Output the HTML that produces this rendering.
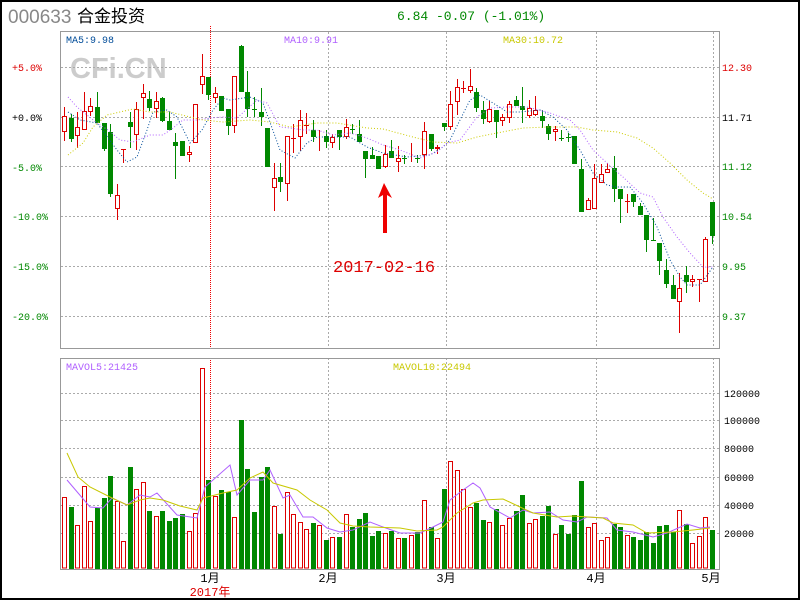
<!DOCTYPE html>
<html><head><meta charset="utf-8">
<style>
html,body{margin:0;padding:0;background:#fff;}
#wrap{position:relative;width:800px;height:600px;overflow:hidden;}
svg text{font-family:"Liberation Mono",monospace;}
</style></head><body><div id="wrap">
<svg id="s" width="800" height="600" viewBox="0 0 800 600" xmlns="http://www.w3.org/2000/svg">
<rect x="1" y="1" width="798" height="598" fill="#fff" stroke="#000" stroke-width="2"/>
<text x="8" y="23" font-family="Liberation Sans, sans-serif" font-size="19" fill="#888" style="font-family:'Liberation Sans',sans-serif">000633</text>
<text x="77" y="22" font-size="17" fill="#000" style="font-family:'Liberation Sans','Noto Sans CJK SC',sans-serif">合金投资</text>
<text x="397" y="20" font-size="13" fill="#080">6.84 -0.07 (-1.01%)</text>
<text x="70" y="78" font-size="29" font-weight="bold" fill="#ccc" style="font-family:'Liberation Sans',sans-serif">CFi.CN</text>
<g id="grid" stroke="#aaa" stroke-width="1" stroke-dasharray="2 2" fill="none">
<line x1="61" y1="67.5" x2="720" y2="67.5"/><line x1="61" y1="117.5" x2="720" y2="117.5"/><line x1="61" y1="166.5" x2="720" y2="166.5"/><line x1="61" y1="216.5" x2="720" y2="216.5"/><line x1="61" y1="266.5" x2="720" y2="266.5"/><line x1="61" y1="316.5" x2="720" y2="316.5"/>
<line x1="328.5" y1="32" x2="328.5" y2="348"/><line x1="446.5" y1="32" x2="446.5" y2="348"/><line x1="596.5" y1="32" x2="596.5" y2="348"/><line x1="713.5" y1="32" x2="713.5" y2="348"/>
<line x1="61" y1="393.5" x2="720" y2="393.5"/><line x1="61" y1="420.5" x2="720" y2="420.5"/><line x1="61" y1="448.5" x2="720" y2="448.5"/><line x1="61" y1="477.5" x2="720" y2="477.5"/><line x1="61" y1="505.5" x2="720" y2="505.5"/><line x1="61" y1="533.5" x2="720" y2="533.5"/>
<line x1="328.5" y1="358" x2="328.5" y2="569"/><line x1="446.5" y1="358" x2="446.5" y2="569"/><line x1="596.5" y1="358" x2="596.5" y2="569"/><line x1="713.5" y1="358" x2="713.5" y2="569"/>
</g>
<line x1="210.5" y1="26" x2="210.5" y2="348" stroke="#e00" stroke-dasharray="1 1"/>
<line x1="210.5" y1="358" x2="210.5" y2="569" stroke="#e00" stroke-dasharray="1 1"/>
<rect x="60.5" y="31.5" width="659" height="317" fill="none" stroke="#999"/>
<rect x="60.5" y="358.5" width="659" height="211" fill="none" stroke="#999"/>
<g id="cand"></g>
<g id="vol"></g>
<g fill="none" stroke-width="1">
<polyline stroke="#004c99" stroke-dasharray="1 2" points="68,112 80,120 97,123 117,150 127,162 137,157 147,130 153,112 167,110 177,117 190,143 202,130 213,110 223,98 230,100 250,97 263,103 280,150 295,158 307,143 317,137 333,137 350,137 367,147 383,153 407,157 430,155 443,147 450,140 460,120 470,100 480,95 493,103 507,112 520,112 540,110 553,117 567,130 580,150 593,173 607,185 617,187 630,187 643,203 657,227 670,260 680,277 687,285 700,285 713,267"/>
<polyline stroke="#b060ff" stroke-dasharray="1 2" points="68,97 77,107 97,123 108,130 120,140 133,142 150,135 163,135 173,128 183,120 197,120 210,118 223,117 237,118 257,100 267,103 280,127 290,128 303,130 317,130 333,135 350,133 367,138 383,145 400,150 420,158 437,152 447,143 460,140 477,117 490,108 507,107 527,107 547,112 570,120 580,130 593,150 607,163 623,177 640,193 653,197 663,217 677,237 690,253 703,267 713,267"/>
<polyline stroke="#cccc00" stroke-dasharray="1 2" points="68,155 83,143 93,127 107,115 120,112 133,109 150,112 170,112 190,117 203,120 223,122 250,120 270,122 290,127 317,123 337,123 367,128 383,129 413,137 433,142 457,143 477,137 497,133 523,128 547,127 577,127 593,130 617,132 637,138 653,148 670,163 687,180 703,193 713,199"/>
<polyline stroke="#b060ff" points="67,480 90,507 103,508 112,498 127,505 140,495 150,497 157,493 177,515 197,518 205,487 230,465 237,495 250,480 263,480 270,470 283,498 290,495 303,517 313,517 327,528 340,532 353,530 370,522 383,527 400,533 420,533 433,527 443,522 450,500 463,490 473,483 480,488 490,507 510,518 523,510 533,513 550,512 563,520 577,522 587,517 607,518 617,530 633,532 653,537 667,533 687,524 700,528 710,527"/>
<polyline stroke="#c8c800" points="67,453 78,477 90,487 110,497 127,505 140,500 150,498 163,500 180,506 197,510 203,498 223,493 237,490 250,478 263,472 273,483 297,490 310,500 327,510 340,523 353,526 370,527 400,528 417,531 437,530 443,527 457,513 473,503 483,500 503,499 520,507 533,513 557,517 573,516 603,518 613,523 633,525 647,533 673,532 693,530 710,528"/>
</g>
<text x="66" y="43" font-size="10" fill="#004c99">MA5:9.98</text>
<text x="284" y="43" font-size="10" fill="#b060ff">MA10:9.91</text>
<text x="503" y="43" font-size="10" fill="#c8c800">MA30:10.72</text>
<text x="66" y="370" font-size="10" fill="#b060ff">MAVOL5:21425</text>
<text x="393" y="370" font-size="10" fill="#c8c800">MAVOL10:22494</text>
<g font-size="10">
<text x="12" y="71" fill="#d00">+5.0%</text>
<text x="12" y="121" fill="#000">+0.0%</text>
<text x="12" y="171" fill="#080">-5.0%</text>
<text x="12" y="220" fill="#080">-10.0%</text>
<text x="12" y="270" fill="#080">-15.0%</text>
<text x="12" y="320" fill="#080">-20.0%</text>
<text x="722" y="71" fill="#d00">12.30</text>
<text x="722" y="121" fill="#000">11.71</text>
<text x="722" y="170" fill="#080">11.12</text>
<text x="722" y="220" fill="#080">10.54</text>
<text x="722" y="270" fill="#080">9.95</text>
<text x="722" y="320" fill="#080">9.37</text>
<text x="724" y="397" fill="#000">120000</text>
<text x="724" y="424" fill="#000">100000</text>
<text x="724" y="452" fill="#000">80000</text>
<text x="724" y="481" fill="#000">60000</text>
<text x="724" y="509" fill="#000">40000</text>
<text x="724" y="537" fill="#000">20000</text>
</g>
<g font-size="12" style="font-family:'Liberation Sans','Noto Sans CJK SC',sans-serif" text-anchor="middle">
<text x="210" y="582" fill="#000">1月</text>
<text x="210" y="596" fill="#d00">2017年</text>
<text x="328" y="582" fill="#000">2月</text>
<text x="446" y="582" fill="#000">3月</text>
<text x="596" y="582" fill="#000">4月</text>
<text x="711" y="582" fill="#000">5月</text>
</g>
<path d="M384,183 L378,198 L383,195 L383,233 L387,233 L387,195 L392,198 Z" fill="#e00"/>
<text x="333" y="272" font-size="17" fill="#d00">2017-02-16</text>
</svg>
<script>
var C=[
"r 116 132 107 141","g 118 139 114 142","r 127 136 112 148","r 111 130 92 130","r 106 112 98 116","g 107 123 92 123","g 123 149 123 151","g 132 194 124 197","r 195 209 184 220","r 149 149 149 163",
"g 122 127 112 148","r 109 135 102 150","r 93 98 84 119","g 99 108 91 111","r 101 109 92 118","g 98 121 97 122","g 121 130 112 130","g 142 146 133 179","g 141 156 141 156","r 152 155 146 162",
"r 104 143 104 143","r 76 85 54 94","g 77 95 77 100","r 93 98 87 103","g 96 111 96 111","g 109 126 109 135","r 76 126 76 133","g 46 92 45 92","g 92 109 71 117","g 109 109 97 117",
"g 112 117 88 126","g 128 167 128 167","r 178 188 163 211","g 177 182 163 192","r 136 184 136 201","r 138 138 124 153","r 120 137 110 151","r 125 125 113 134","g 130 137 120 142","r 136 137 130 151",
"g 136 142 130 148","r 137 143 134 148","g 130 137 130 150","r 127 137 119 139","g 129 129 124 134","g 134 142 120 142","g 151 159 151 178","g 155 159 147 159","g 156 169 156 169","r 154 167 145 168",
"g 151 158 140 158","r 158 162 146 172","g 158 158 155 164","r 155 156 143 162","g 158 158 155 163","r 131 155 122 169","g 134 149 134 151","r 147 149 145 154","g 123 127 123 131","r 104 127 91 130",
"r 87 102 79 115","r 88 88 81 93","r 86 91 69 93","g 92 108 88 112","g 110 119 101 124","r 109 122 101 123","g 110 122 110 138","r 117 121 114 126","r 104 118 101 123","g 100 106 96 106",
"g 106 110 87 123","r 108 116 100 118","r 110 115 96 116","g 116 121 110 128","g 126 134 124 140","r 129 132 126 141","g 138 138 130 141","g 137 137 133 142","g 136 164 136 164","g 169 212 159 212",
"r 200 210 198 210","r 178 209 164 209","r 174 183 164 183","r 169 173 163 173","g 168 189 156 202","g 189 199 189 223","r 201 201 194 213","g 194 202 194 207","g 206 215 203 215","g 215 240 215 252",
"g 240 240 218 240","g 243 261 243 275","g 270 284 259 288","g 285 299 275 299","r 288 302 273 333","g 275 282 266 293","r 279 282 275 287","r 279 279 279 302","r 239 282 237 282","g 202 236 202 244"];
var V=[497,507,525,486,521,508,498,476,501,541,467,489,482,511,516,511,521,518,514,531,513,368,480,496,490,492,517,420,469,512,477,467,506,534,492,514,522,529,523,525,540,537,537,514,527,519,513,536,531,533,531,538,538,535,532,500,527,538,489,461,470,489,507,503,520,522,509,525,518,511,495,523,519,516,506,534,525,534,515,481,527,523,540,537,524,527,535,537,540,532,543,526,525,532,510,524,543,536,517,530];
var ns="http://www.w3.org/2000/svg",cg=document.getElementById("cand"),vg=document.getElementById("vol");
function el(g,t,a){var e=document.createElementNS(ns,t);for(var k in a)e.setAttribute(k,a[k]);g.appendChild(e);}
for(var i=0;i<100;i++){var d=C[i].split(" "),r=d[0]=="r",col=r?"#d00":"#080";
var cx=Math.round(64.3+i*6.54)+0.5;var bt=+d[1],bb=+d[2],wt=+d[3],wb=+d[4];
el(cg,"line",{x1:cx,y1:wt,x2:cx,y2:wb,stroke:col});
if(bb-bt<1){el(cg,"rect",{x:cx-2.5,y:bt,width:5,height:1,fill:col});}
else if(r){el(cg,"rect",{x:cx-2,y:bt+0.5,width:4,height:bb-bt-1,fill:"#fff",stroke:col});}
else{el(cg,"rect",{x:cx-2.5,y:bt,width:5,height:bb-bt,fill:col});}
var vt=V[i];
if(r){el(vg,"rect",{x:cx-2,y:vt+0.5,width:4,height:568-vt-0.5,fill:"#fff",stroke:col});}
else{el(vg,"rect",{x:cx-2.5,y:vt,width:5,height:569-vt,fill:col});}
}
</script>
</div></body></html>
